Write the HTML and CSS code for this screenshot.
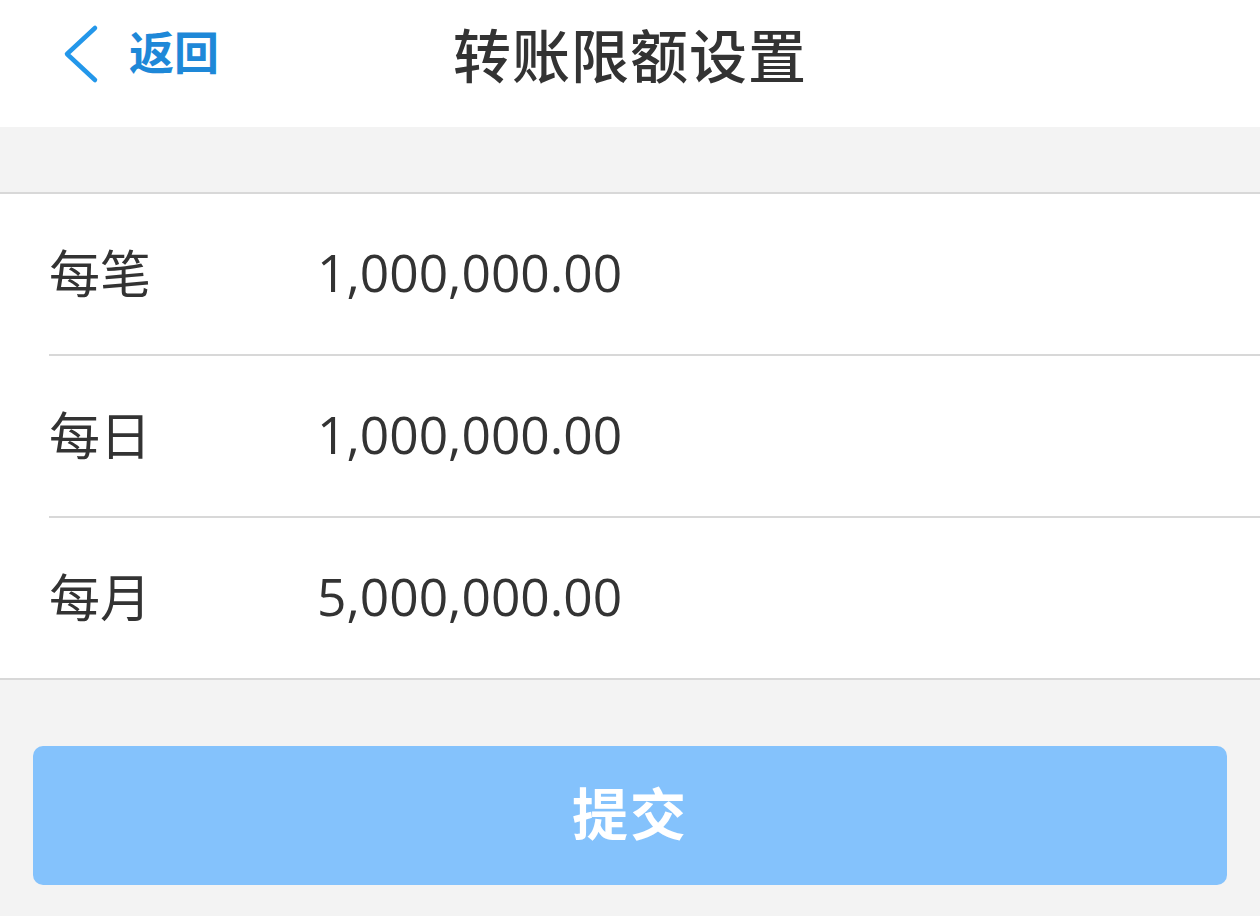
FILE: index.html
```html
<!DOCTYPE html>
<html lang="zh-CN">
<head>
<meta charset="utf-8">
<title>转账限额设置</title>
<link rel="stylesheet" href="styles.css">
</head>
<body>
<div class="page">
  <header class="topbar">
    <a class="back" href="#">
      <svg class="chev" width="40" height="60" viewBox="0 0 40 60"><path d="M34 4 L6 30 L34 56" fill="none" stroke="#2397ea" stroke-width="4.5" stroke-linecap="round" stroke-linejoin="round"/></svg>
      <span class="back-text">返回</span>
    </a>
    <h1 class="title">转账限额设置</h1>
  </header>
  <div class="spacer"></div>
  <section class="list">
    <div class="row"><span class="label">每笔</span><span class="value">1,000,000.00</span></div>
    <div class="row"><span class="label">每日</span><span class="value">1,000,000.00</span></div>
    <div class="row"><span class="label">每月</span><span class="value">5,000,000.00</span></div>
  </section>
  <div class="actions">
    <button class="submit">提交</button>
  </div>
</div>
</body>
</html>
```
FILE: styles.css
```css
html, body {
  margin: 0;
  padding: 0;
  background: #f3f3f3;
  font-family: "Noto Sans CJK SC", "Noto Sans", sans-serif;
  color: #333;
}
.page {
  width: 1260px;
  min-height: 916px;
  background: #f3f3f3;
}
.topbar {
  height: 127px;
  background: #fff;
  display: flex;
  align-items: center;
  justify-content: center;
  position: relative;
}
.back {
  position: absolute;
  left: 61px;
  top: 0;
  height: 106px;
  display: flex;
  align-items: center;
  gap: 28px;
  text-decoration: none;
  color: #1e88d8;
}
.chev { display: block; margin-top: 2px; }
.back-text {
  font-size: 45px;
  font-weight: 700;
  color: #1e88d8;
  line-height: 1;
  margin-bottom: 6px;
}
.title {
  margin: 0 0 22px 0;
  font-size: 58px;
  font-weight: 500;
  color: #333;
  line-height: 1;
  letter-spacing: 1px;
}
.spacer { height: 65px; }
.list {
  background: #fff;
  border-top: 2px solid #d8d8d8;
  border-bottom: 2px solid #d8d8d8;
}
.row {
  margin-left: 49px;
  height: 160px;
  display: flex;
  align-items: center;
  border-bottom: 2px solid #d8d8d8;
}
.row:last-child { border-bottom: none; }
.label {
  width: 266px;
  font-size: 51px;
  line-height: 1;
  color: #333;
  margin-bottom: 6px;
}
.value {
  font-family: "Open Sans", "Noto Sans", sans-serif;
  font-size: 51.5px;
  line-height: 1;
  color: #333;
  padding-left: 2px;
  margin-bottom: 2px;
}
.actions {
  padding: 66px 33px 0 33px;
}
.submit {
  width: 100%;
  height: 139px;
  border: none;
  border-radius: 10px;
  background: #84c2fc;
  color: #fff;
  font-family: "Noto Sans CJK SC", sans-serif;
  font-size: 56px;
  font-weight: 700;
  letter-spacing: 2px;
  line-height: 1;
  padding: 0 0 10px 0;
}
```
